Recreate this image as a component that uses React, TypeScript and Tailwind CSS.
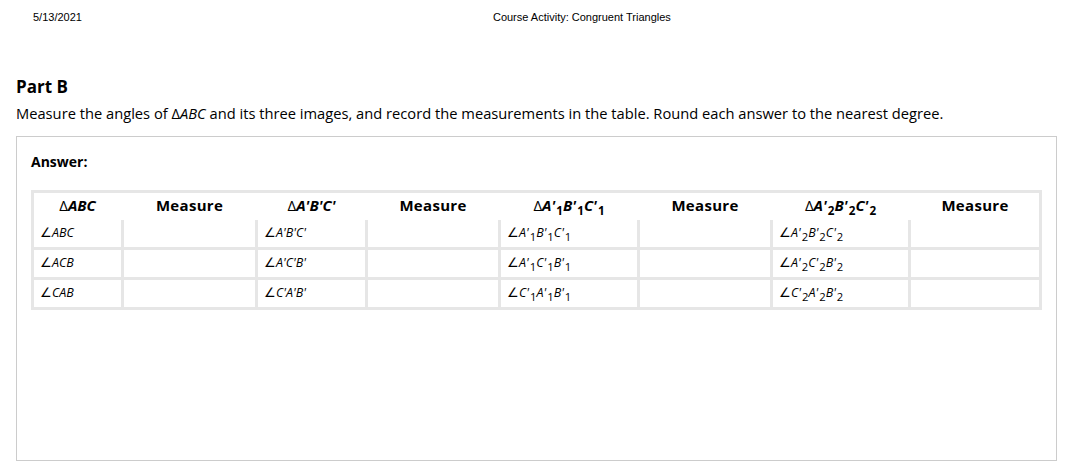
const rows = [
  [
    ['ABC'],
    ["A'B'C'"],
    [["A'", '1'], ["B'", '1'], ["C'", '1']],
    [["A'", '2'], ["B'", '2'], ["C'", '2']],
  ],
  [
    ['ACB'],
    ["A'C'B'"],
    [["A'", '1'], ["C'", '1'], ["B'", '1']],
    [["A'", '2'], ["C'", '2'], ["B'", '2']],
  ],
  [
    ['CAB'],
    ["C'A'B'"],
    [["C'", '1'], ["A'", '1'], ["B'", '1']],
    [["C'", '2'], ["A'", '2'], ["B'", '2']],
  ],
];

type Part = string | string[];

const Label = ({ parts, sub }: { parts: Part[]; sub: string }) => (
  <>
    {parts.map((p, i) =>
      typeof p === 'string' ? (
        <span key={i}>{p}</span>
      ) : (
        <span key={i}>
          {p[0].replace("'", '')}
          <span className="tracking-[1px]">'</span>
          <sub className={`not-italic bottom-[-0.3em] ${sub}`}>{p[1]}</sub>
        </span>
      )
    )}
  </>
);

const cols = 'grid grid-cols-[87px_131px_107px_130px_136px_130px_135px_128px] gap-x-[3px]';

const headers: Part[][] = [
  ['ABC'],
  ["A'B'C'"],
  [["A'", '1'], ["B'", '1'], ["C'", '1']],
  [["A'", '2'], ["B'", '2'], ["C'", '2']],
];

export default function App() {
  return (
    <div className="w-[1066px] h-[464px] bg-white text-black font-['Open_Sans',sans-serif] overflow-hidden">
      {/* Print header */}
      <div className="flex pt-[11px] font-['Liberation_Sans',Arial,sans-serif] text-[11px] leading-[13px]">
        <span className="ml-[33px]">5/13/2021</span>
        <span className="ml-[411px]">Course Activity: Congruent Triangles</span>
      </div>

      <div className="px-4">
        <h2 className="mt-[51px] text-[17px] leading-[24px] font-bold">Part B</h2>
        <p className="mt-[4px] text-[14.7px] leading-[20px]">
          Measure the angles of Δ<i>ABC</i> and its three images, and record the measurements in the table. Round
          each answer to the nearest degree.
        </p>

        {/* Answer box */}
        <div className="mt-[13px] h-[325px] w-[1041px] border border-[#cccccc] px-[14px] pt-[15px]">
          <div className="text-[14px] leading-[19px] font-bold">Answer:</div>

          <div className="mt-[19px] w-[1011px] bg-[#e6e6e6] p-[3px]">
            <div className={`${cols} bg-white h-[27px] pb-[3px] items-center text-[15px] leading-[20px] font-bold text-center`}>
              {headers.map((h, i) => (
                <div key={i} className="contents">
                  <div>
                    <span className="font-normal">Δ</span>
                    <i>
                      <Label parts={h} sub="text-[78%]" />
                    </i>
                  </div>
                  <div className="tracking-[0.3px]">Measure</div>
                </div>
              ))}
            </div>
            <div className={`${cols} gap-y-[3px] text-[12.5px] italic`}>
              {rows.map((r, ri) =>
                r.map((c, ci) => (
                  <div key={`${ri}-${ci}`} className="contents">
                    <div className="bg-white h-[27px] flex items-center pl-[6px]">
                      <span className="not-italic">∠</span>
                      <Label parts={c as Part[]} sub="text-[90%]" />
                    </div>
                    <div className="bg-white h-[27px]" />
                  </div>
                ))
              )}
            </div>
          </div>
        </div>
      </div>
    </div>
  );
}
